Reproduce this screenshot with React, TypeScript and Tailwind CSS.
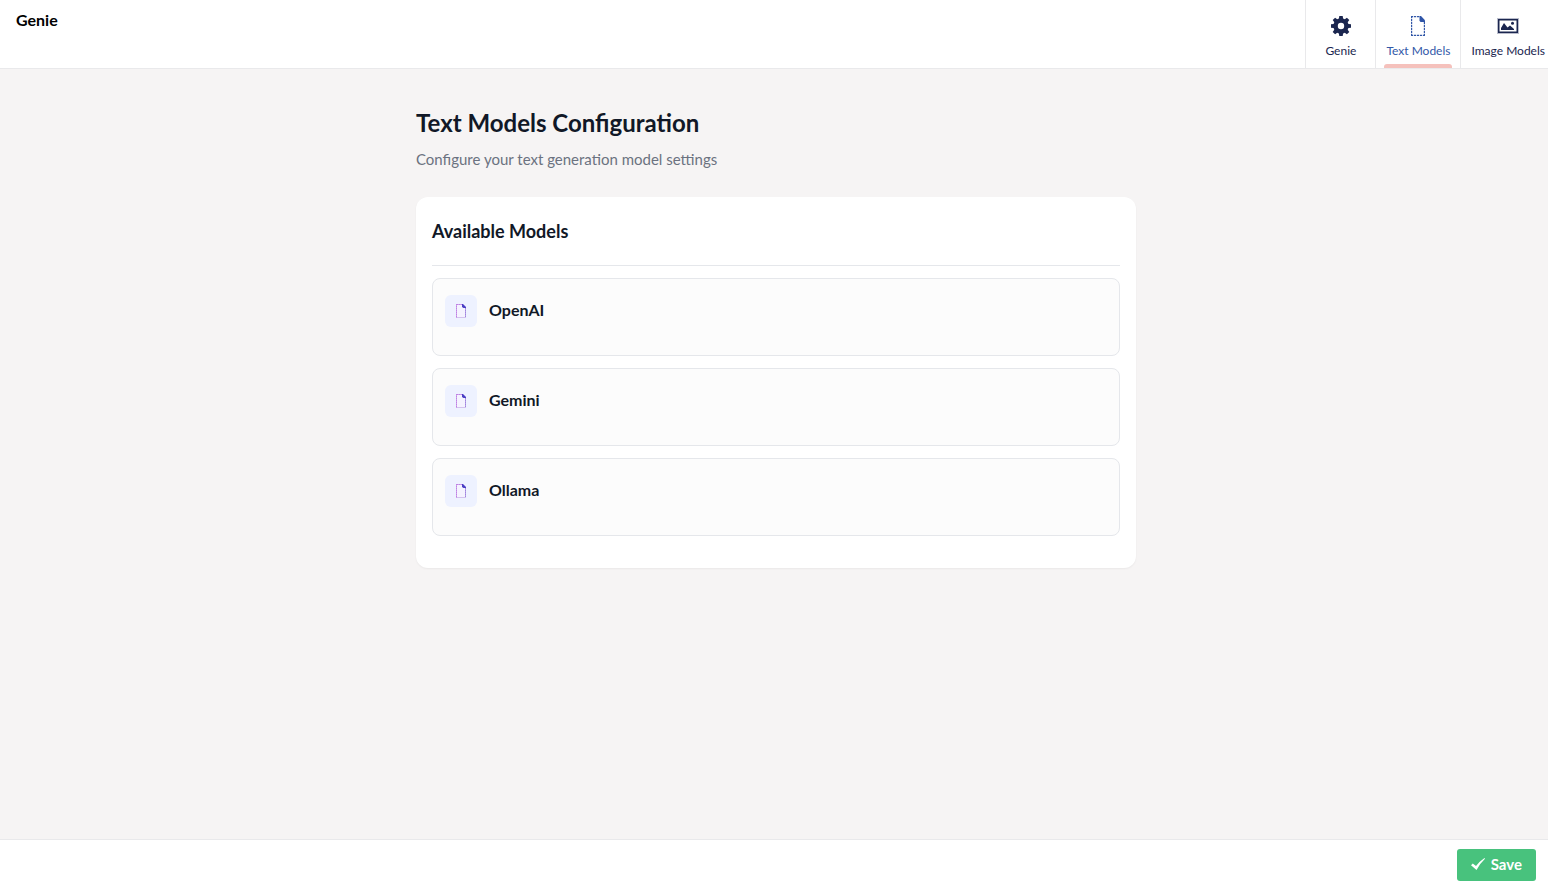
import type { ReactNode } from "react";

function GearIcon() {
  return (
    <svg width="20" height="20" viewBox="0 0 20 20" aria-hidden="true">
      <path
        fill="#1b264f"
        fillRule="evenodd"
        d="M7.9 2.6 8.3 0h3.4l.4 2.6 1.7.7 2.1-1.6 2.4 2.4-1.6 2.1.7 1.7 2.6.4v3.4l-2.6.4-.7 1.7 1.6 2.1-2.4 2.4-2.1-1.6-1.7.7-.4 2.6H8.3l-.4-2.6-1.7-.7-2.1 1.6-2.4-2.4 1.6-2.1-.7-1.7L0 11.7V8.3l2.6-.4.7-1.7-1.6-2.1 2.4-2.4 2.1 1.6zM10 6.8a3.2 3.2 0 1 0 0 6.4 3.2 3.2 0 0 0 0-6.4z"
      />
    </svg>
  );
}

function DashedDocumentIcon() {
  return (
    <svg width="14" height="20" viewBox="0 0 14 20" aria-hidden="true">
      <g fill="none" stroke="#3358a8" strokeWidth="1.2">
        <path strokeDasharray="2.2 .8" d="M0 .6H9" />
        <path strokeDasharray="2.2 .8" d="M.6 0V20" />
        <path strokeDasharray="2.2 .8" d="M0 19.4H14" />
        <path strokeDasharray="2.2 .8" d="M13.4 6V20" />
      </g>
      <path fill="#2f55a8" d="M8.5 0H10l4 4.3V6H9.500L8.500 4.800z" />
    </svg>
  );
}

function PictureIcon() {
  return (
    <svg width="22" height="16" viewBox="0 0 22 16" aria-hidden="true">
      <rect width="22" height="16" fill="#b9bccb" />
      <rect x="1" y="1" width="20" height="14" fill="#1b264f" />
      <rect x="2.5" y="2.5" width="17" height="11" fill="#fff" />
      <path fill="#1b264f" d="M4 12V10L7 5 10.5 9.5 13 7.5 17 11V12z" />
      <circle cx="15.5" cy="5.2" r="1.5" fill="#1b264f" />
    </svg>
  );
}

function ModelIcon() {
  return (
    <svg width="10" height="14" viewBox="0 0 10 14" aria-hidden="true">
      <path fill="#f5f3ff" d="M.5.5H7L9.5 4v9.5h-9z" />
      <g fill="none">
        <path stroke="#cf9fec" d="M.5 14V0M1 .5H6" />
        <path stroke="#b39ce6" d="M9.5 4V13" />
        <path stroke="#d3c2ee" d="M1 13.5H10" />
        <path stroke="#bd84e2" strokeDasharray="1 1" d="M.5 13V0M1 .5H6" />
        <path stroke="#9f86dd" strokeDasharray="1 1" d="M9.5 4V13" />
      </g>
      <path fill="#4a3fc4" d="M6 0h1l3 3v1H7.5L6 3z" />
    </svg>
  );
}

function CheckIcon() {
  return (
    <svg width="14" height="12" viewBox="0 0 14 12" aria-hidden="true">
      <path fill="#fff" d="M0 7.2 1.8 5.400 5 8.100Q8.5 3.300 13.5 0L14 .7Q9 5.300 5.500 12z" />
    </svg>
  );
}

type TabProps = { label: string; icon: ReactNode; active?: boolean };

function Tab({ label, icon, active = false }: TabProps) {
  return (
    <a
      href="#"
      aria-current={active ? "page" : undefined}
      className={`relative flex h-full min-w-[70px] shrink-0 flex-col items-center border-l border-[#e9e9eb] px-[10px] pt-4 text-xs leading-5 ${
        active ? "text-[#3358a8]" : "text-[#1b264f]"
      }`}
    >
      <span className="flex h-5 items-center">{icon}</span>
      <span className="mt-[5px] whitespace-nowrap">{label}</span>
      {active && <span className="absolute inset-x-2 bottom-0 h-1 rounded-t-[3px] bg-[#f5c1bc]" />}
    </a>
  );
}

const models = ["OpenAI", "Gemini", "Ollama"];

export default function App() {
  return (
    <div className="flex min-h-screen flex-col bg-[#f6f4f4] font-['Lato',sans-serif] text-[#111827]">
      <header className="flex h-[69px] justify-between overflow-hidden border-b border-[#e9e9eb] bg-white pl-4">
        <p className="pt-2 text-base leading-6 font-bold text-black">Genie</p>
        <nav className="-mr-[7px] flex shrink-0">
          <Tab label="Genie" icon={<GearIcon />} />
          <Tab label="Text Models" icon={<DashedDocumentIcon />} active />
          <Tab label="Image Models" icon={<PictureIcon />} />
        </nav>
      </header>

      <main className="flex-1 pt-9 pl-1">
        <div className="mx-auto max-w-[720px]">
          <h1 className="text-2xl leading-9 font-bold">Text Models Configuration</h1>
          <p className="mt-2 text-[15px] leading-5 text-[#6b7280]">
            Configure your text generation model settings
          </p>
          <section className="mt-7 rounded-xl bg-white px-4 pb-8 shadow-xs">
            <h2 className="border-b border-[#e5e7eb] pt-5 pb-5 text-lg leading-7 font-bold">
              Available Models
            </h2>
            <ul className="mt-3 flex flex-col gap-3">
              {models.map((name) => (
                <li
                  key={name}
                  className="flex h-[78px] items-start gap-3 rounded-lg border border-[#e5e7eb] bg-[#fcfcfc] px-3 pt-4"
                >
                  <span className="flex size-8 items-center justify-center rounded-md bg-[#eef2ff]">
                    <ModelIcon />
                  </span>
                  <h3 className="text-base leading-[30px] font-bold">{name}</h3>
                </li>
              ))}
            </ul>
          </section>
        </div>
      </main>

      <footer className="flex h-[46px] items-start justify-end border-t border-[#e9e9eb] bg-white pt-[9px] pr-3">
        <button
          type="button"
          className="flex h-8 items-center gap-[6px] rounded-[3px] bg-[#48c27d] px-[14px] pb-[2px] text-[15px] font-bold text-white"
        >
          <CheckIcon />
          Save
        </button>
      </footer>
    </div>
  );
}
